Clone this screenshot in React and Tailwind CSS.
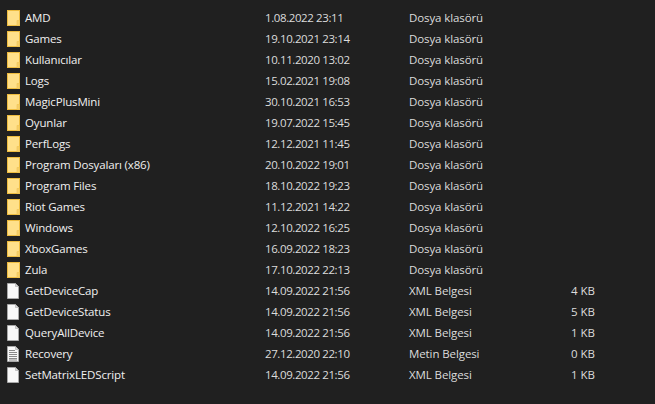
import React from 'react';

const ROWS = [
  { name: 'AMD', date: '1.08.2022 23:11', type: 'Dosya klasörü', icon: 'folder' },
  { name: 'Games', date: '19.10.2021 23:14', type: 'Dosya klasörü', icon: 'folder' },
  { name: 'Kullanıcılar', date: '10.11.2020 13:02', type: 'Dosya klasörü', icon: 'folder' },
  { name: 'Logs', date: '15.02.2021 19:08', type: 'Dosya klasörü', icon: 'folder' },
  { name: 'MagicPlusMini', date: '30.10.2021 16:53', type: 'Dosya klasörü', icon: 'folder' },
  { name: 'Oyunlar', date: '19.07.2022 15:45', type: 'Dosya klasörü', icon: 'folder' },
  { name: 'PerfLogs', date: '12.12.2021 11:45', type: 'Dosya klasörü', icon: 'folder' },
  { name: 'Program Dosyaları (x86)', date: '20.10.2022 19:01', type: 'Dosya klasörü', icon: 'folder' },
  { name: 'Program Files', date: '18.10.2022 19:23', type: 'Dosya klasörü', icon: 'folder' },
  { name: 'Riot Games', date: '11.12.2021 14:22', type: 'Dosya klasörü', icon: 'folder' },
  { name: 'Windows', date: '12.10.2022 16:25', type: 'Dosya klasörü', icon: 'folder' },
  { name: 'XboxGames', date: '16.09.2022 18:23', type: 'Dosya klasörü', icon: 'folder' },
  { name: 'Zula', date: '17.10.2022 22:13', type: 'Dosya klasörü', icon: 'folder' },
  { name: 'GetDeviceCap', date: '14.09.2022 21:56', type: 'XML Belgesi', size: '4 KB', icon: 'file' },
  { name: 'GetDeviceStatus', date: '14.09.2022 21:56', type: 'XML Belgesi', size: '5 KB', icon: 'file' },
  { name: 'QueryAllDevice', date: '14.09.2022 21:56', type: 'XML Belgesi', size: '1 KB', icon: 'file' },
  { name: 'Recovery', date: '27.12.2020 22:10', type: 'Metin Belgesi', size: '0 KB', icon: 'text' },
  { name: 'SetMatrixLEDScript', date: '14.09.2022 21:56', type: 'XML Belgesi', size: '1 KB', icon: 'file' },
];

function FolderIcon() {
  return (
    <svg width="13" height="16" viewBox="0 0 13 16" className="shrink-0 -mr-px">
      <rect x="0.5" y="0.5" width="12" height="15" fill="#ffe08a" stroke="#eebc3f" />
      <path d="M10 10.5h2.5v5H10z" fill="#f5cf6a" stroke="#f0c552" strokeWidth="0.6" />
    </svg>
  );
}

function FileIcon({ lines }) {
  return (
    <svg width="12" height="16" viewBox="0 0 12 16" className="shrink-0">
      <path d="M0.5 0.5H8.5L11.5 3.5V15.5H0.5Z" fill="#f8f8f8" stroke="#a8a8a8" />
      <path d="M8.5 0.5V3.5H11.5Z" fill="#d8d8d8" stroke="#a8a8a8" strokeWidth="0.6" />
      {lines && (
        <path d="M2 4.5h6M2 6.5h8M2 8.5h8M2 10.5h8M2 12.5h8M2 14h8" stroke="#8a8a8a" strokeWidth="1" />
      )}
    </svg>
  );
}

export default function App() {
  return (
    <div className="h-[404px] w-[655px] overflow-hidden bg-[#202020] pt-[7px] font-['Open_Sans','Noto_Sans',sans-serif] text-[11.5px] text-[#dcdcdc]">
      {ROWS.map((row) => (
        <div key={row.name} className="grid h-[21px] grid-cols-[265px_144px_130px_56px] items-center">
          <div className="flex items-center gap-[6px] pl-[7px] text-[#f0f0f0]">
            {row.icon === 'folder' ? <FolderIcon /> : <FileIcon lines={row.icon === 'text'} />}
            <span className="whitespace-nowrap tracking-[-0.15px]">{row.name}</span>
          </div>
          <span className="whitespace-nowrap tracking-[-0.4px]">{row.date}</span>
          <span className="whitespace-nowrap tracking-[-0.1px]">{row.type}</span>
          <span className="whitespace-nowrap text-right">{row.size}</span>
        </div>
      ))}
    </div>
  );
}
